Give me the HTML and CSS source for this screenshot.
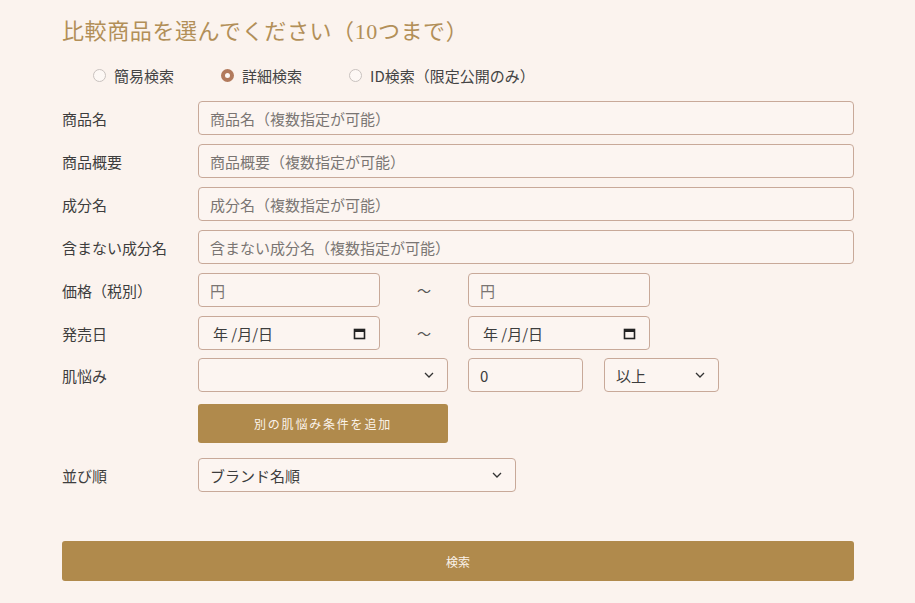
FILE: index.html
```
<!DOCTYPE html>
<html lang="ja">

<head>
    <meta charset="UTF-8">
    <meta name="viewport" content="width=device-width, initial-scale=1.0">
    <title>比較商品を選ぶ</title>
    <link rel="stylesheet" href="styles.css">
</head>

<body>
    <div class="page">
        <h1 class="titulo">比較商品を選んでください（10つまで）</h1>

        <div class="modos">
            <label class="modo"><span class="radio"></span>簡易検索</label>
            <label class="modo"><span class="radio marcado"></span>詳細検索</label>
            <label class="modo"><span class="radio"></span>ID検索（限定公開のみ）</label>
        </div>

        <form class="form" onsubmit="return false">
            <div class="linha">
                <div class="rotulo">商品名</div>
                <input class="campo cheio" type="text" placeholder="商品名（複数指定が可能）">
            </div>
            <div class="linha">
                <div class="rotulo">商品概要</div>
                <input class="campo cheio" type="text" placeholder="商品概要（複数指定が可能）">
            </div>
            <div class="linha">
                <div class="rotulo">成分名</div>
                <input class="campo cheio" type="text" placeholder="成分名（複数指定が可能）">
            </div>
            <div class="linha">
                <div class="rotulo">含まない成分名</div>
                <input class="campo cheio" type="text" placeholder="含まない成分名（複数指定が可能）">
            </div>
            <div class="linha">
                <div class="rotulo">価格（税別）</div>
                <input class="campo meio" type="text" placeholder="円">
                <span class="til">～</span>
                <input class="campo meio" type="text" placeholder="円">
            </div>
            <div class="linha">
                <div class="rotulo">発売日</div>
                <div class="campo meio data">
                    <span>年 /月/日</span>
                    <svg class="cal" width="13" height="13" viewBox="0 0 13 13"><rect x="1.5" y="2.5" width="10" height="9" fill="none" stroke="#222" stroke-width="1.6"/><rect x="1" y="2" width="11" height="3" fill="#222"/></svg>
                </div>
                <span class="til">～</span>
                <div class="campo meio data">
                    <span>年 /月/日</span>
                    <svg class="cal" width="13" height="13" viewBox="0 0 13 13"><rect x="1.5" y="2.5" width="10" height="9" fill="none" stroke="#222" stroke-width="1.6"/><rect x="1" y="2" width="11" height="3" fill="#222"/></svg>
                </div>
            </div>
            <div class="linha linha-pele">
                <div class="rotulo">肌悩み</div>
                <div class="sel sel-pele">
                    <select class="campo"><option></option></select>
                    <svg class="seta" width="10" height="6" viewBox="0 0 10 6"><path d="M1 1l4 4 4-4" fill="none" stroke="#333" stroke-width="1.3"/></svg>
                </div>
                <input class="campo numero" type="text" value="0">
                <div class="sel sel-nivel">
                    <select class="campo"><option>以上</option></select>
                    <svg class="seta" width="10" height="6" viewBox="0 0 10 6"><path d="M1 1l4 4 4-4" fill="none" stroke="#333" stroke-width="1.3"/></svg>
                </div>
            </div>
            <div class="linha linha-botao">
                <div class="rotulo"></div>
                <button class="botao adicionar" type="button">別の肌悩み条件を追加</button>
            </div>
            <div class="linha linha-ordem">
                <div class="rotulo">並び順</div>
                <div class="sel sel-ordem">
                    <select class="campo"><option>ブランド名順</option></select>
                    <svg class="seta" width="10" height="6" viewBox="0 0 10 6"><path d="M1 1l4 4 4-4" fill="none" stroke="#333" stroke-width="1.3"/></svg>
                </div>
            </div>

            <button class="botao buscar" type="submit">検索</button>
        </form>
    </div>
</body>

</html>
```

FILE: styles.css
```
* {
    box-sizing: border-box;
}

body {
    background-color: #fbf3ee;
    color: #3b3b3b;
    font-family: "Noto Sans CJK JP", "Noto Sans", sans-serif;
    margin: 0;
}

.page {
    padding: 17px 61px 0 62px;
}

.titulo {
    margin: 0;
    font-family: "Liberation Serif", "Noto Sans CJK JP", serif;
    font-size: 22px;
    font-weight: normal;
    line-height: 30px;
    color: #b28f58;
    letter-spacing: 0.6px;
}

.modos {
    display: flex;
    gap: 47px;
    height: 22px;
    margin-top: 17px;
    padding-left: 31px;
    align-items: center;
}

.modo {
    display: flex;
    align-items: center;
    gap: 8px;
    font-size: 15px;
    color: #444;
}

.radio {
    width: 13px;
    height: 13px;
    border-radius: 50%;
    border: 1px solid #c9c2bf;
    background-color: #fdf8f5;
}

.radio.marcado {
    border: 4px solid #b27a5c;
    background-color: #fdf8f5;
}

.form {
    margin-top: 15px;
}

.linha {
    display: flex;
    align-items: center;
    margin-bottom: 9px;
}

.linha-pele {
    margin-top: -1px;
    margin-bottom: 12px;
}

.linha-botao {
    margin-bottom: 15px;
}

.linha-ordem {
    margin-bottom: 49px;
}

.rotulo {
    width: 136px;
    flex-shrink: 0;
    font-size: 15px;
    color: #3d3d3d;
}

.campo {
    height: 34px;
    border: 1px solid #c8a999;
    border-radius: 4px;
    background-color: #fcf5f1;
    padding: 0 11px;
    font-family: inherit;
    font-size: 15px;
    color: #3d3d3d;
    outline: none;
}

.campo::placeholder {
    color: #7a7573;
}

.cheio {
    flex: 1;
}

.meio {
    width: 182px;
}

.til {
    width: 88px;
    text-align: center;
    font-size: 14px;
    color: #555;
}

.data {
    display: flex;
    align-items: center;
    justify-content: space-between;
    padding: 0 13px 0 14px;
}

.sel {
    position: relative;
}

.sel select {
    appearance: none;
    width: 100%;
}

.seta {
    position: absolute;
    right: 14px;
    top: 14px;
    pointer-events: none;
}

.sel-pele {
    width: 250px;
}

.numero {
    width: 115px;
    margin-left: 20px;
}

.sel-nivel {
    width: 115px;
    margin-left: 21px;
}

.sel-ordem {
    width: 318px;
}

.botao {
    border: none;
    border-radius: 3px;
    background-color: #b08a4c;
    color: #fbf3ea;
    font-family: inherit;
    cursor: pointer;
}

.adicionar {
    width: 250px;
    height: 39px;
    font-size: 12px;
    letter-spacing: 1.8px;
}

.buscar {
    width: 100%;
    height: 40px;
    font-size: 12px;
}
```
